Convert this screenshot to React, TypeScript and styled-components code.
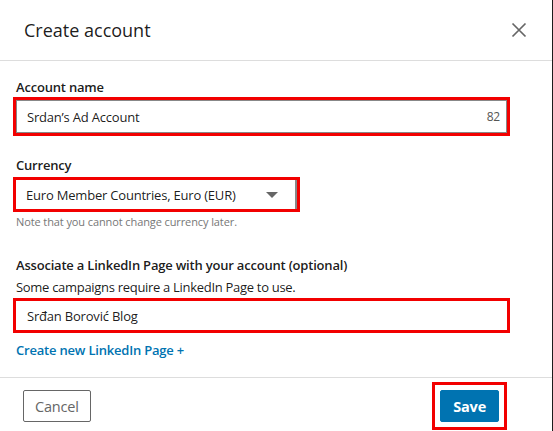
import React from 'react';
import styled, { createGlobalStyle } from 'styled-components';

const GlobalStyle = createGlobalStyle`
  html, body {
    margin: 0;
    padding: 0;
    background: #fff;
  }
  body {
    font-family: "Open Sans", "Noto Sans", Arial, sans-serif;
    color: rgba(0, 0, 0, 0.9);
  }
`;

const Dialog = styled.div`
  width: 552px;
  height: 431px;
  border-right: 1px solid #1d1d1d;
  display: flex;
  flex-direction: column;
`;

const Header = styled.header`
  height: 60px;
  flex-shrink: 0;
  display: flex;
  align-items: center;
  justify-content: space-between;
  padding: 0 21px 0 24px;
  border-bottom: 1px solid #ddd;
`;

const Title = styled.h2`
  margin: 0;
  font-size: 18px;
  font-weight: 400;
  color: rgba(0, 0, 0, 0.9);
`;

const CloseButton = styled.button`
  border: none;
  background: none;
  padding: 0;
  width: 24px;
  height: 24px;
  display: flex;
  align-items: center;
  justify-content: center;
`;

const Body = styled.div`
  flex: 1;
  padding: 16px 16px 0 16px;
  display: flex;
  flex-direction: column;
  align-items: flex-start;
`;

const Label = styled.label<{ $top?: number }>`
  display: block;
  margin-top: ${p => p.$top ?? 0}px;
  font-size: 13px;
  font-weight: 600;
  line-height: 20px;
  letter-spacing: -0.2px;
  color: rgba(0, 0, 0, 0.9);
`;

const Hint = styled.div`
  font-size: 13px;
  line-height: 20px;
  margin-top: 2px;
  letter-spacing: -0.3px;
  color: rgba(0, 0, 0, 0.9);
`;

const Note = styled.div`
  font-size: 11px;
  line-height: 16px;
  margin-top: 5px;
  letter-spacing: -0.1px;
  color: #777;
`;

const Field = styled.div<{ $width?: number; $height: number; $top: number; $bordered?: boolean }>`
  box-sizing: border-box;
  width: ${p => (p.$width ? `${p.$width}px` : '491px')};
  height: ${p => p.$height}px;
  margin-top: ${p => p.$top}px;
  border: 1px solid ${p => (p.$bordered ? '#888' : 'transparent')};
  outline: 3px solid #f20000;
  display: flex;
  align-items: center;
  padding: 0 6px 0 10px;
  font-size: 13px;
  letter-spacing: -0.2px;
  color: rgba(0, 0, 0, 0.9);
`;

const FieldText = styled.span`
  flex: 1;
`;

const Counter = styled.span`
  font-size: 12px;
  color: #555;
`;

const Caret = styled.span`
  width: 0;
  height: 0;
  border-left: 6px solid transparent;
  border-right: 6px solid transparent;
  border-top: 6px solid #666;
  margin-right: 11px;
`;

const SelectField = styled(Field)`
  border-left: none;
  border-top: none;
  border-bottom: none;
  border-right: 2px solid #888;
`;

const Link = styled.a`
  margin-top: 10px;
  font-size: 13px;
  font-weight: 600;
  line-height: 20px;
  letter-spacing: -0.2px;
  color: #0073b1;
  text-decoration: none;
`;

const Footer = styled.footer`
  height: 50px;
  flex-shrink: 0;
  border-top: 1px solid #ddd;
  display: flex;
  align-items: center;
  justify-content: space-between;
  padding: 3px 45px 0 23px;
`;

const Highlight = styled.span`
  display: inline-flex;
  border: 3px solid #f20000;
  padding: 5px;
`;

const Button = styled.button<{ $primary?: boolean }>`
  box-sizing: border-box;
  height: 32px;
  padding: 0 ${p => (p.$primary ? 12 : 11)}px;
  border-radius: 2px;
  font-family: inherit;
  font-size: 14.5px;
  font-weight: ${p => (p.$primary ? 700 : 400)};
  letter-spacing: -0.2px;
  border: 1px solid ${p => (p.$primary ? '#0073b1' : '#666')};
  background: ${p => (p.$primary ? '#0073b1' : '#fff')};
  color: ${p => (p.$primary ? '#fff' : '#666')};
`;

export default function App() {
  return (
    <>
      <GlobalStyle />
      <Dialog>
        <Header>
          <Title>Create account</Title>
          <CloseButton aria-label="Close">
            <svg width="16" height="16" viewBox="0 0 16 16">
              <path d="M1.5 1.5 L14.5 14.5 M14.5 1.5 L1.5 14.5" stroke="#666" strokeWidth="1.7" fill="none" />
            </svg>
          </CloseButton>
        </Header>
        <Body>
          <Label>Account name</Label>
          <Field $top={3} $height={33} $bordered>
            <FieldText>Srdan’s Ad Account</FieldText>
            <Counter>82</Counter>
          </Field>

          <Label $top={22}>Currency</Label>
          <SelectField $top={5} $width={281} $height={29}>
            <FieldText>Euro Member Countries, Euro (EUR)</FieldText>
            <Caret />
          </SelectField>
          <Note>Note that you cannot change currency later.</Note>

          <Label $top={25}>Associate a LinkedIn Page with your account (optional)</Label>
          <Hint>Some campaigns require a LinkedIn Page to use.</Hint>
          <Field $top={4} $height={29}>
            <FieldText>Srđan Borović Blog</FieldText>
          </Field>

          <Link href="#">Create new LinkedIn Page +</Link>
        </Body>
        <Footer>
          <Button>Cancel</Button>
          <Highlight>
            <Button $primary>Save</Button>
          </Highlight>
        </Footer>
      </Dialog>
    </>
  );
}
